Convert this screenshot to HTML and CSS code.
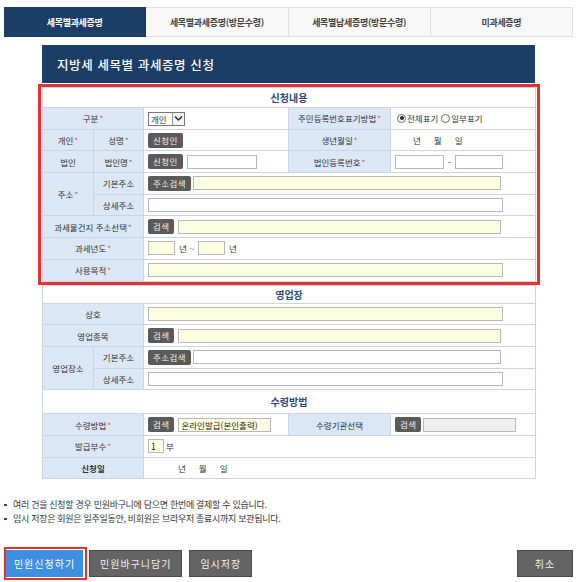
FILE: index.html
```html
<!DOCTYPE html>
<html lang="ko">
<head>
<meta charset="utf-8">
<title>지방세 세목별 과세증명 신청</title>
<link rel="stylesheet" href="styles.css">
</head>
<body>
<div class="tabs">
  <div class="tab active">세목별과세증명</div>
  <div class="tab">세목별과세증명(방문수령)</div>
  <div class="tab">세목별납세증명(방문수령)</div>
  <div class="tab">미과세증명</div>
</div>
<div class="content">
  <h1 class="title">지방세 세목별 과세증명 신청</h1>
  <div class="highlight">
    <table class="form">
      <colgroup><col class="c1"><col class="c2"><col class="c3"><col class="c4"><col class="c5"></colgroup>
      <tr class="sec"><td colspan="5">신청내용</td></tr>
      <tr>
        <th colspan="2">구분<i>*</i></th>
        <td><span class="sel">개인<span class="arr"><svg width="9" height="7" viewBox="0 0 9 7"><path d="M1 1.5 L4.5 5 L8 1.5" fill="none" stroke="#222" stroke-width="1.4"/></svg></span></span></td>
        <th>주민등록번호표기방법<i>*</i></th>
        <td><div class="f g0"><span class="radio on"></span>전체표기<span class="radio"></span>일부표기</div></td>
      </tr>
      <tr>
        <th>개인<i>*</i></th><th>성명<i>*</i></th>
        <td><button class="btn">신청인</button></td>
        <th>생년월일<i>*</i></th>
        <td><div class="date d1"><span>년</span><span>월</span><span>일</span></div></td>
      </tr>
      <tr>
        <th>법인</th><th>법인명<i>*</i></th>
        <td><div class="f"><button class="btn">신청인</button><input class="inp w70"></div></td>
        <th>법인등록번호<i>*</i></th>
        <td><div class="f g3"><input class="inp w49">-<input class="inp w48"></div></td>
      </tr>
      <tr>
        <th rowspan="2">주소<i>*</i></th><th>기본주소</th>
        <td colspan="3"><div class="f g2"><button class="btn">주소검색</button><input class="inp yl w308"></div></td>
      </tr>
      <tr>
        <th>상세주소</th>
        <td colspan="3"><input class="inp w355"></td>
      </tr>
      <tr>
        <th colspan="2">과세물건지 주소선택<i>*</i></th>
        <td colspan="3"><div class="f"><button class="btn">검색</button><input class="inp yl w323"></div></td>
      </tr>
      <tr>
        <th colspan="2">과세년도<i>*</i></th>
        <td colspan="3"><div class="f g3"><input class="inp yl w27">년 ~<input class="inp yl w27">년</div></td>
      </tr>
      <tr>
        <th colspan="2">사용목적<i>*</i></th>
        <td colspan="3"><input class="inp yl w355"></td>
      </tr>
    </table>
  </div>
  <table class="form">
    <colgroup><col class="c1"><col class="c2"><col class="c3"><col class="c4"><col class="c5"></colgroup>
    <tr class="sec s2"><td colspan="5">영업장</td></tr>
    <tr>
      <th colspan="2">상호</th>
      <td colspan="3"><input class="inp yl w355"></td>
    </tr>
    <tr>
      <th colspan="2">영업종목</th>
      <td colspan="3"><div class="f"><button class="btn">검색</button><input class="inp yl w323"></div></td>
    </tr>
    <tr>
      <th rowspan="2">영업장소</th><th>기본주소</th>
      <td colspan="3"><div class="f g2"><button class="btn">주소검색</button><input class="inp w308"></div></td>
    </tr>
    <tr>
      <th>상세주소</th>
      <td colspan="3"><input class="inp w355"></td>
    </tr>
    <tr class="sec s3"><td colspan="5">수령방법</td></tr>
    <tr>
      <th colspan="2">수령방법<i>*</i></th>
      <td><div class="f"><button class="btn">검색</button><input class="inp yl w93" value="온라인발급(본인출력)"></div></td>
      <th>수령기관선택</th>
      <td><div class="f g2"><button class="btn">검색</button><input class="inp gr w93"></div></td>
    </tr>
    <tr>
      <th colspan="2">발급부수<i>*</i></th>
      <td colspan="3"><div class="f g2"><input class="inp yl w16" value="1">부</div></td>
    </tr>
    <tr>
      <th colspan="2" class="b">신청일</th>
      <td colspan="3"><div class="date d2"><span>년</span><span>월</span><span>일</span></div></td>
    </tr>
  </table>
</div>
<ul class="notes">
  <li>여러 건을 신청할 경우 민원바구니에 담으면 한번에 결제할 수 있습니다.</li>
  <li>임시 저장은 회원은 일주일동안, 비회원은 브라우저 종료시까지 보관됩니다.</li>
</ul>
<div class="actions">
  <div class="mark"><button class="abtn blue">민원신청하기</button></div>
  <button class="abtn">민원바구니담기</button>
  <button class="abtn">임시저장</button>
  <button class="abtn cancel">취소</button>
</div>
</body>
</html>
```

FILE: styles.css
```css
* { box-sizing: border-box; }
body {
  margin: 0;
  width: 580px;
  font-family: "Noto Sans CJK KR", "Noto Sans", sans-serif;
  color: #333;
  background: #fff;
}
.tabs {
  display: flex;
  margin: 7px 7px 0 4px;
  height: 30px;
}
.tab {
  flex: 1;
  display: flex;
  align-items: center;
  justify-content: center;
  font-size: 9px;
  font-weight: 700;
  letter-spacing: -0.3px;
  color: #444;
  background: #f8f8f8;
  border: 1px solid #e1e1e1;
  border-left: none;
}
.tab.active {
  background: #1c3e66;
  border-color: #1c3e66;
  color: #fff;
}
.content {
  margin: 8px 0 0 42px;
  width: 493px;
}
.title {
  margin: 0;
  height: 38px;
  padding-left: 15px;
  display: flex;
  align-items: center;
  background: #1c3e66;
  color: #fff;
  font-size: 12.5px;
  font-weight: 500;
  letter-spacing: 0.6px;
}
.highlight {
  margin: 1px -5px 0 -4px;
  border: 3px solid #e3322f;
  padding: 0 2px 0 1px;
}
.form {
  width: 493px;
  border-collapse: collapse;
  table-layout: fixed;
}
.c1 { width: 51px; }
.c2 { width: 50px; }
.c3 { width: 145px; }
.c4 { width: 102px; }
.c5 { width: 145px; }
.form td, .form th {
  border: 1px solid #cad5e3;
  height: 21.7px;
  padding: 0 0 0 4px;
  font-size: 8.5px;
  font-weight: 400;
  color: #333;
  white-space: nowrap;
}
.form th {
  background: #dbe7f4;
  text-align: center;
  padding: 0;
}
.form th.b { font-weight: 700; }
.form th i {
  font-style: normal;
  color: #e2413b;
  font-size: 8px;
  margin-left: 1px;
}
.form .sec td {
  height: 20px;
  text-align: center;
  font-weight: 700;
  font-size: 10px;
  color: #2b4c75;
  background: #fff;
  padding: 0;
}
.form .sec.s2 td { height: 18px; }
.form .sec.s3 td { height: 24px; }
.f {
  display: flex;
  align-items: center;
  gap: 4px;
}
.f.g0 { gap: 1px; }
.f.g2 { gap: 2px; }
.f.g3 { gap: 4px; }
.btn {
  display: inline-block;
  height: 15px;
  padding: 0 5px;
  border: none;
  border-radius: 2px;
  background: #5a5a5a;
  color: #eee;
  font-family: inherit;
  font-size: 8.5px;
  letter-spacing: 0.4px;
  line-height: 15px;
  vertical-align: middle;
  white-space: nowrap;
}
.inp {
  display: block;
  height: 14px;
  padding: 0 2px;
  border: 1px solid #b3b8c8;
  background: #fff;
  font-family: inherit;
  font-size: 8.5px;
  color: #222;
}
.yl { background: #fdfde2; border-color: #b9b9b9; }
.gr { background: #efefef; border-color: #b9b9b9; }
.w16 { width: 16px; }
.w27 { width: 27px; }
.w48 { width: 48px; }
.w49 { width: 49px; }
.w70 { width: 70px; }
.w93 { width: 93px; }
.w308 { width: 308px; }
.w323 { width: 323px; }
.w355 { width: 355px; }
.sel {
  display: inline-flex;
  align-items: center;
  justify-content: space-between;
  width: 37px;
  height: 14px;
  border: 1px solid #777;
  padding-left: 2px;
  font-size: 8.5px;
  background: #fff;
  vertical-align: middle;
}
.arr {
  display: flex;
  align-items: center;
  justify-content: center;
  width: 12px;
  height: 12px;
  border-left: 1px solid #999;
  background: #f4f4f4;
}
.radio {
  display: inline-block;
  width: 9px;
  height: 9px;
  border: 1px solid #666;
  border-radius: 50%;
  background: #fff;
  position: relative;
  margin-left: 2px;
}
.radio.on::after {
  content: "";
  position: absolute;
  left: 1.5px;
  top: 1.5px;
  width: 4px;
  height: 4px;
  border-radius: 50%;
  background: #222;
}
.date {
  display: flex;
  gap: 13px;
}
.d1 { padding-left: 18px; }
.d2 { padding-left: 30px; }
.notes {
  list-style: none;
  margin: 19px 0 0 4px;
  padding: 0;
  font-size: 9px;
  line-height: 14px;
  letter-spacing: -0.3px;
  color: #333;
}
.notes li::before {
  content: "";
  display: inline-block;
  width: 3px;
  height: 2px;
  background: #444;
  margin: 0 6px 2px 0;
  vertical-align: middle;
}
.actions {
  display: flex;
  align-items: center;
  margin: 21px 0 0 4px;
  padding-right: 7px;
}
.mark {
  border: 2px solid #e3322f;
  padding: 0 2px 0 0;
  display: flex;
}
.mark .abtn { margin: 1px 0 1px 0; }
.abtn {
  height: 27px;
  padding: 0 10px;
  margin-left: 2px;
  border: 1px solid #4a4a4a;
  background: #646464;
  color: #f0f0f0;
  font-family: inherit;
  font-size: 10px;
  letter-spacing: 1px;
  white-space: nowrap;
}
.abtn + .abtn { margin-left: 7px; }
.abtn.blue {
  width: 77px;
  padding: 0;
  background: #3f8fe0;
  border-color: #3f8fe0;
  color: #fff;
}
.abtn.cancel {
  margin-left: auto;
  width: 56px;
  padding: 0;
}
```
